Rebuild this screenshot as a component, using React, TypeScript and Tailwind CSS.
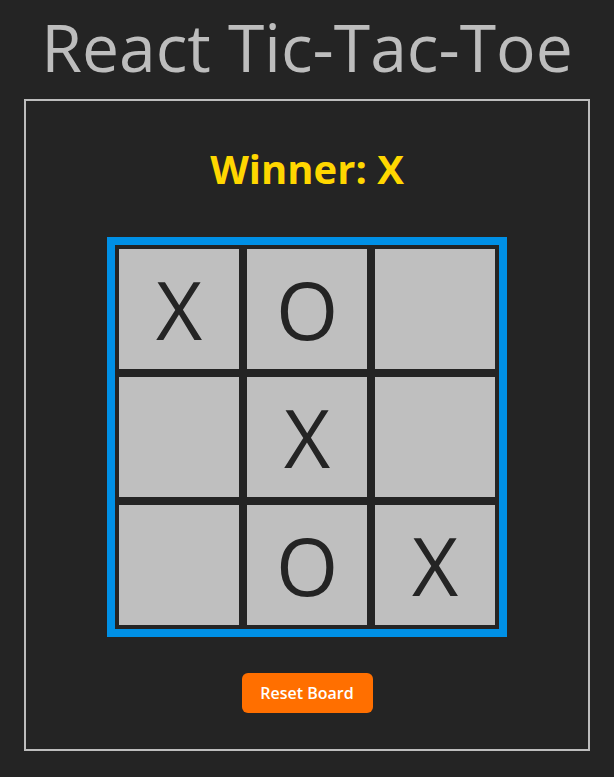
import React from "react";

const cells = ["X", "O", "", "", "X", "", "", "O", "X"];

export default function App() {
  return (
    <div className="min-h-screen w-full bg-[#242424] flex flex-col items-center" style={{ fontFamily: '"Open Sans", "Noto Sans", sans-serif' }}>
      <h1 className="text-[66px] leading-[92px] h-[92px] text-[#bdbdbd] font-normal text-center whitespace-nowrap">
        React Tic-Tac-Toe
      </h1>
      <div className="mt-[7px] w-[566px] h-[652px] border-2 border-[#bdbdbd] flex flex-col items-center">
        <div className="mt-[48px] text-[40px] leading-[40px] font-bold text-[#ffd700]">Winner: X</div>
        <div className="mt-[48px] w-[400px] h-[400px] border-8 border-[#0090e6] bg-[#242424] p-[4px] grid grid-cols-3 gap-[8px]">
          {cells.map((c, i) => (
            <div key={i} className="bg-[#bfbfbf] flex items-center justify-center text-[80px] leading-none text-[#242424]">
              {c}
            </div>
          ))}
        </div>
        <button className="mt-[36px] w-[131px] h-[40px] rounded-[6px] bg-[#ff6f00] text-white text-[16px] font-semibold">
          Reset Board
        </button>
      </div>
    </div>
  );
}
